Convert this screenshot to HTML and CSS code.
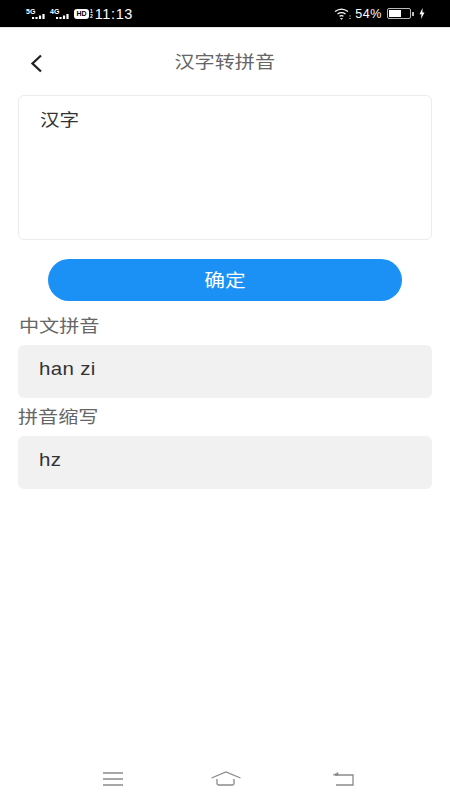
FILE: index.html
```html
<!DOCTYPE html>
<html lang="zh">
<head>
<meta charset="utf-8">
<title>汉字转拼音</title>
<link rel="stylesheet" href="styles.css">
</head>
<body>
<div class="screen">
  <header class="status">
    <div class="status-group left">
      <span class="net"><span class="net-label">5G</span><svg width="14" height="5" viewBox="0 0 14 5"><path d="M1 3v2M4.500 3v2M8 1.500v3.500M11.500 0v5" stroke="#fff" stroke-width="2.200"/></svg></span>
      <span class="net"><span class="net-label">4G</span><svg width="14" height="5" viewBox="0 0 14 5"><path d="M1 3v2M4.500 3v2M8 1.500v3.500M11.500 0v5" stroke="#fff" stroke-width="2.200"/></svg></span>
      <span class="hd">HD</span>
      <span class="sim"><span>1</span><span>2</span></span>
      <span class="time">11:13</span>
    </div>
    <div class="status-group right">
      <svg class="wifi" width="17" height="12" viewBox="0 0 17 12" fill="none" stroke="#fff"><path d="M1 3.500C5 .5 10 .5 14 3.500M3.500 6C6 4.300 9 4.300 11.500 6M5.500 8.300C6.800 7.400 8.200 7.400 9.500 8.300" stroke-width="1.300"/><path d="M6.500 10.500h2l-1 1z" fill="#fff" stroke-width=".6"/><path d="M16 7.500v1M16 10v1" stroke-width="1"/></svg>
      <span class="pct">54%</span>
      <span class="battery"><span class="battery-fill"></span></span>
      <span class="battery-tip"></span>
      <svg class="bolt" width="6" height="11" viewBox="0 0 6 11"><path d="M3.500 0 .5 6.200h2L2 11l3.500-6.500h-2z" fill="#fff"/></svg>
    </div>
  </header>

  <div class="titlebar">
    <svg class="back" width="13" height="19" viewBox="0 0 13 19" fill="none"><path d="M11 1.500 2.500 9.500l8.500 8" stroke="#222" stroke-width="2.300"/></svg>
    <h1 class="title"><span class="wide mid">汉字转拼音</span></h1>
  </div>

  <main class="content">
    <div class="input-box"><span class="wide">汉字</span></div>
    <button class="confirm" type="button"><span class="wide mid">确定</span></button>
    <div class="label first"><span class="wide">中文拼音</span></div>
    <div class="result"><span class="wide latin">han zi</span></div>
    <div class="label"><span class="wide">拼音缩写</span></div>
    <div class="result"><span class="wide latin">hz</span></div>
  </main>

  <nav class="navbar">
    <svg width="22" height="14" viewBox="0 0 22 14" fill="none" stroke="#8a8a8a" stroke-width="1.300"><path d="M1 1h20M1 7h20M1 13h20"/></svg>
    <svg class="home" width="30" height="15" viewBox="0 0 30 15" fill="none" stroke="#8a8a8a" stroke-width="1.300"><path d="M.5 7 15 1l14.500 6M6 8v4.500q0 1.500 1.500 1.500h14q1.500 0 1.500-1.500V8"/></svg>
    <svg width="22" height="14" viewBox="0 0 22 14" fill="none" stroke="#8a8a8a" stroke-width="1.300"><path d="M3 3h18v10H4"/><path d="M1 3l5-2.500v3z" fill="#8a8a8a" stroke-width=".5"/></svg>
  </nav>
</div>
</body>
</html>
```
FILE: styles.css
```css
* { box-sizing: border-box; }
html, body { margin: 0; padding: 0; }
body { background: #fff; font-family: "Noto Sans CJK SC", "Liberation Sans", sans-serif; }
.screen { width: 450px; height: 800px; display: flex; flex-direction: column; background: #fff; overflow: hidden; }

.status { height: 28px; flex: none; background: #000; color: #fff; display: flex; justify-content: space-between; align-items: center; padding: 0 25px 0 26px; border-bottom: 1px solid #e4e4e4; }
.status-group { display: flex; align-items: center; }
.net { display: flex; flex-direction: column; width: 21px; margin-right: 3px; }
.net-label { font: 700 7px/7px "Liberation Sans", sans-serif; height: 6px; }
.net svg { display: block; margin-left: 6px; }
.hd { font: 700 7px/10px "Liberation Sans", sans-serif; background: #fff; color: #000; border-radius: 3px; height: 10px; width: 15px; text-align: center; }
.sim { display: flex; flex-direction: column; font: 700 5px/5px "Liberation Sans", sans-serif; margin: 0 2px 0 1px; }
.time { font: 400 14.500px/16px "Liberation Sans", sans-serif; letter-spacing: .6px; }
.wifi { margin-right: 4px; }
.pct { font: 400 12.500px/14px "Liberation Sans", sans-serif; letter-spacing: .6px; margin-right: 5px; }
.battery { width: 24px; height: 11px; border: 1px solid #bbb; border-radius: 2px; display: block; padding: 1px; }
.battery-fill { display: block; width: 12px; height: 7px; background: #fff; }
.battery-tip { width: 2px; height: 4px; background: #bbb; margin: 0 5px 0 1px; }

/* The reference is slightly stretched sideways, so text is widened to suit. */
.wide { display: inline-block; transform: scaleX(1.15); transform-origin: left center; }
.wide.mid { transform-origin: center; }
.wide.latin { transform: scaleX(1.17); }

.titlebar { height: 67px; flex: none; position: relative; display: flex; align-items: center; justify-content: center; }
.title { margin: 0 0 1px; font-weight: 400; font-size: 17.500px; line-height: 24px; color: #666; }
.back { position: absolute; left: 30px; top: 26px; }

.content { flex: 1; padding: 0 18px; display: flex; flex-direction: column; }
.input-box { height: 145px; border: 1px solid #ececec; border-radius: 6px; padding: 10px 21px; font-size: 17px; line-height: 25px; color: #333; }
.confirm { display: block; width: 354px; height: 42px; margin: 19px 0 0 30px; border: 0; border-radius: 21px; background: #1b90f5; color: #fff; font: 400 18px/24px "Noto Sans CJK SC", sans-serif; padding: 0 0 2px; }
.label { font-size: 17.500px; line-height: 24px; color: #666; height: 24px; margin: 6px 0 8px; }
.label.first { margin: 12px 0 8px 1px; }
.result { height: 53px; background: #f1f1f1; border-radius: 6px; padding: 0 21px; font: 400 17.500px/48px "Liberation Sans", sans-serif; color: #333; letter-spacing: .3px; }

.navbar { flex: none; height: 46px; padding: 3px 96px 0 102px; display: flex; justify-content: space-between; align-items: center; }
.home { margin-right: 4px; }
```
